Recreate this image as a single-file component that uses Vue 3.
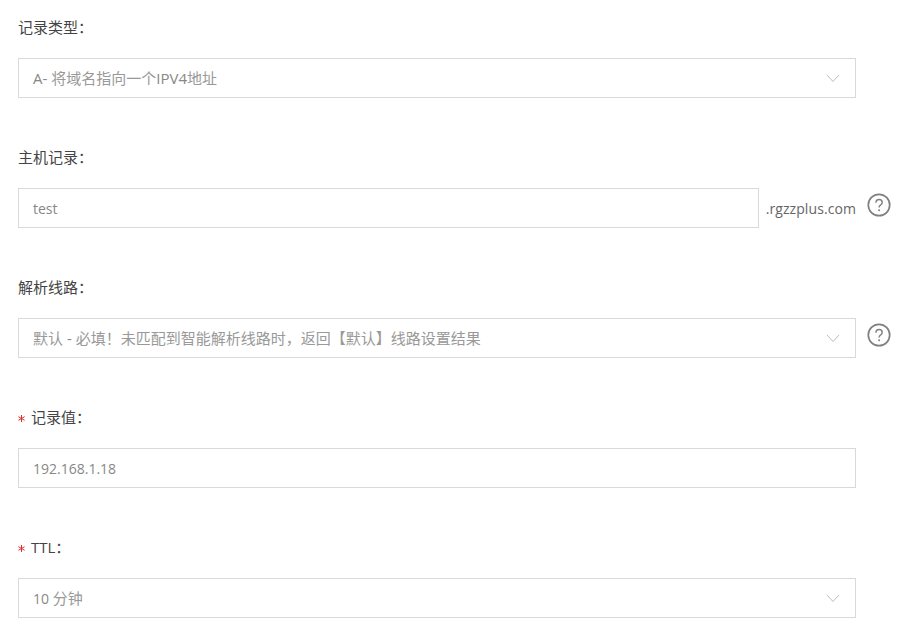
<script setup>
const CJK = /[\u3000-\u303f\u4e00-\u9fff\uff00-\uffef]/
const split = (text) =>
  text.split(/([\u3000-\u303f\u4e00-\u9fff\uff00-\uffef]+)/).filter(Boolean).map((t) => ({
    t,
    large: CJK.test(t) || /[A-Z-]/.test(t),
    soft: CJK.test(t)
  }))

const rows = [
  { label: '记录类型：', required: false, kind: 'select', value: 'A- 将域名指向一个IPV4地址', help: false },
  { label: '主机记录：', required: false, kind: 'suffix', value: 'test', help: true },
  { label: '解析线路：', required: false, kind: 'select', value: '默认 - 必填！未匹配到智能解析线路时，返回【默认】线路设置结果', help: true },
  { label: '记录值：', required: true, kind: 'input', value: '192.168.1.18', help: false },
  { label: 'TTL：', required: true, kind: 'select', value: '10 分钟', help: false }
].map((r) => ({
  ...r,
  labelRuns: split(r.label),
  valueRuns: split(r.value),
  plain: !CJK.test(r.value)
}))
</script>

<template>
  <div class="page">
    <div v-for="row in rows" :key="row.label" class="item">
      <div class="label">
        <svg v-if="row.required" class="star" width="7" height="7" viewBox="0 0 7 7">
          <path d="M3.5 0v7M.4 1.7l6.2 3.6M.4 5.3l6.2-3.6" fill="none" stroke="#d9322c" stroke-width="1" />
        </svg>
        <span><span v-for="(run, i) in row.labelRuns" :key="i" :class="{ large: run.large }">{{ run.t }}</span></span>
      </div>
      <div class="line">
        <div class="control">
          <div class="box">
            <span class="value" :class="{ plain: row.plain }"><span v-for="(run, i) in row.valueRuns" :key="i" :class="{ large: run.large, soft: run.soft }">{{ run.t }}</span></span>
            <svg v-if="row.kind === 'select'" class="arrow" width="14" height="9" viewBox="0 0 14 9">
              <path d="M1 1l6 6.5L13 1" fill="none" stroke="#bdbdbd" stroke-width="1" />
            </svg>
          </div>
          <span v-if="row.kind === 'suffix'" class="suffix">.rgzzplus.com</span>
        </div>
        <svg v-if="row.help" class="help" width="24" height="24" viewBox="0 0 24 24">
          <circle cx="12" cy="12" r="10.7" fill="none" stroke="#808080" stroke-width="1.7" />
          <path d="M8.9 9.7c0-2 1.3-3.2 3.2-3.2s3.1 1.2 3.1 2.9c0 1.4-.8 2-1.7 2.7-.9.6-1.4 1.2-1.4 2.4" fill="none" stroke="#808080" stroke-width="1.4" />
          <circle cx="12.1" cy="17.2" r="1" fill="#808080" />
        </svg>
      </div>
    </div>
  </div>
</template>

<style>
html, body { margin: 0; background: #fff; }
</style>

<style scoped>
.page {
  width: 917px;
  height: 636px;
  overflow: hidden;
  box-sizing: border-box;
  padding: 18px 0 0 18px;
  font-family: "Open Sans", "Noto Sans CJK SC", sans-serif;
  font-size: 14px;
}
.item { height: 130px; }
.label {
  height: 18px;
  line-height: 18px;
  color: #444;
  display: flex;
  align-items: center;
}
.large { font-size: 15px; }
.star {
  width: 7px;
  margin-right: 6px;
  margin-top: 2px;
}
.line {
  display: flex;
  align-items: flex-start;
  margin-top: 22px;
}
.control {
  width: 838px;
  display: flex;
  align-items: center;
}
.box {
  flex: 1;
  min-width: 0;
  height: 40px;
  box-sizing: border-box;
  border: 1px solid #d9d9d9;
  padding: 0 14px;
  display: flex;
  align-items: center;
  justify-content: space-between;
}
.value { color: #888; line-height: 38px; }
.value.plain { margin-top: 2px; }
.soft { color: #999; }
.arrow { margin-right: 1px; }
.suffix {
  flex: 0 0 90px;
  margin-left: 7px;
  color: #666;
  white-space: nowrap;
  letter-spacing: 0.08px;
}
.help { margin-left: 11px; margin-top: 5px; }
</style>
